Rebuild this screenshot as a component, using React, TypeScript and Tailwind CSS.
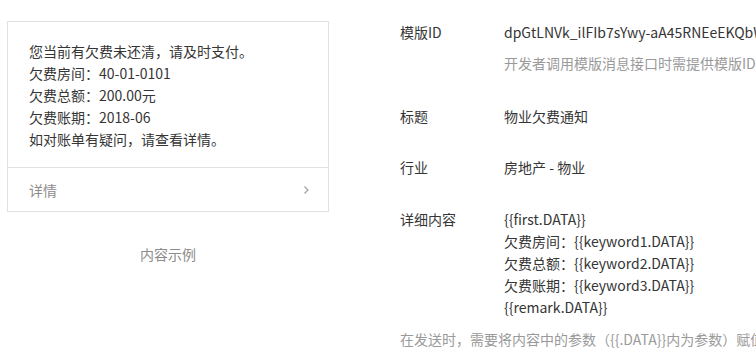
import React from "react";

const font = { fontFamily: '"Noto Sans CJK SC", "Noto Sans", sans-serif' };

function Chevron() {
  return (
    <svg width="7" height="10" viewBox="0 0 7 10" fill="none">
      <path d="M1.5 1.5 L5 5 L1.5 8.5" stroke="#a0a0a0" strokeWidth="1.2" />
    </svg>
  );
}

function Row({ label, children }: { label: string; children: React.ReactNode }) {
  return (
    <div className="flex">
      <div className="w-[104px] shrink-0">{label}</div>
      <div className="flex flex-col whitespace-nowrap">{children}</div>
    </div>
  );
}

export default function App() {
  return (
    <div
      className="w-[756px] h-[353px] overflow-hidden bg-white text-[14px] leading-[22px] text-[#353535] flex"
      style={font}
    >
      <div className="pl-[7px] pt-[21px] w-[329px] shrink-0 flex flex-col">
        <div className="w-[322px] border border-[#e1e1e1]">
          <div className="pl-[21px] pt-[18px] pb-[17px] border-b border-[#e1e1e1]">
            <p>您当前有欠费未还清，请及时支付。</p>
            <p>欠费房间：40-01-0101</p>
            <p>欠费总额：200.00元</p>
            <p>欠费账期：2018-06</p>
            <p>如对账单有疑问，请查看详情。</p>
          </div>
          <div className="h-[43px] pl-[21px] pr-[18px] flex items-center justify-between text-[#8c8c8c]">
            <span>详情</span>
            <Chevron />
          </div>
        </div>
        <p className="mt-[31px] text-center text-[#8c8c8c]">内容示例</p>
      </div>

      <div className="pl-[71px] pt-[21px] flex flex-col whitespace-nowrap">
        <Row label="模版ID">
          <span>dpGtLNVk_ilFIb7sYwy-aA45RNEeEKQbWkdP9pOJZIk</span>
          <span className="mt-[9px] text-[#9a9a9a]">开发者调用模版消息接口时需提供模版ID</span>
        </Row>
        <div className="mt-[31px]">
          <Row label="标题">
            <span>物业欠费通知</span>
          </Row>
        </div>
        <div className="mt-[29px]">
          <Row label="行业">
            <span>房地产 - 物业</span>
          </Row>
        </div>
        <div className="mt-[30px]">
          <Row label="详细内容">
            <span>{"{{first.DATA}}"}</span>
            <span>欠费房间：{"{{keyword1.DATA}}"}</span>
            <span>欠费总额：{"{{keyword2.DATA}}"}</span>
            <span>欠费账期：{"{{keyword3.DATA}}"}</span>
            <span>{"{{remark.DATA}}"}</span>
          </Row>
        </div>
        <p className="mt-[10px] text-[#9a9a9a]">
          在发送时，需要将内容中的参数（{"{{.DATA}}"}内为参数）赋值替换为需要的信息
        </p>
      </div>
    </div>
  );
}
